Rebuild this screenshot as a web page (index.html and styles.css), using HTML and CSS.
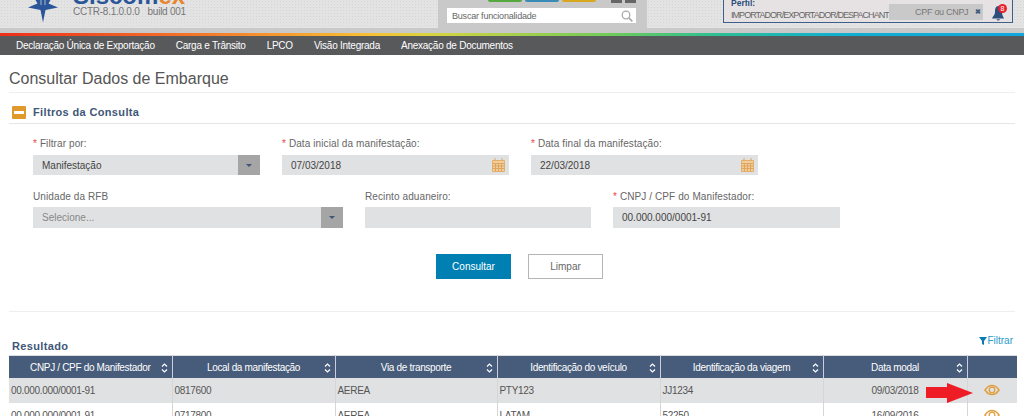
FILE: index.html
```html
<!DOCTYPE html>
<html lang="pt-BR">
<head>
<meta charset="utf-8">
<title>Consultar Dados de Embarque</title>
<link rel="stylesheet" href="styles.css">
</head>
<body>
<header class="top">
  <div class="brand">
    <svg class="star" width="36" height="24" viewBox="0 0 36 24"><path fill="#2a5599" d="M18 22.500 L15.500 10 L3 7.500 L12.500 3.500 L7 -6 L15 -1 L18 -6 L21 -1 L29 -6 L23.500 3.500 L33 7.500 L20.500 10 Z"/><path stroke="#e3e3e3" stroke-width=".7" d="M16 0v5M20 0v5"/></svg>
    <div class="brand-text">
      <div class="logo">Siscom<span class="logo-ex">ex</span></div>
      <div class="build"><span>CCTR-8.1.0.0.0</span><span>build 001</span></div>
    </div>
  </div>
  <div class="search-panel">
    <div class="tabs">
      <i class="tab green"></i><i class="tab blue"></i><i class="tab yellow"></i>
      <span class="squares"><i></i><i></i></span>
    </div>
    <div class="search"><span>Buscar funcionalidade</span>
      <svg width="12" height="12" viewBox="0 0 12 12"><circle cx="5" cy="5" r="3.800" fill="none" stroke="#aaa" stroke-width="1.300"/><path d="M7.800 7.800l3.500 3.500" stroke="#aaa" stroke-width="1.700"/></svg>
    </div>
  </div>
  <div class="user-zone">
    <div class="profile">
      <div class="profile-label">Perfil:</div>
      <div class="profile-value">IMPORTADOR/EXPORTADOR/DESPACHANT</div>
      <div class="cpf"><span>CPF ou CNPJ</span><b>✖</b></div>
      <div class="bell">
        <svg width="12" height="15" viewBox="0 0 12 15"><path fill="#2c4f7c" d="M6.500 0C3.500 0 3 3 3 6 3 9 1 10 0 12.500h12C11 10.500 10 9 10 6 10 3 9.500 0 6.500 0zM4.500 13.200a1.800 1.800 0 003.500 0z"/></svg>
        <span class="badge">8</span>
      </div>
    </div>
  </div>
</header>
<div class="rainbow"></div>
<nav class="nav">
  <a>Declaração Única de Exportação</a>
  <a>Carga e Trânsito</a>
  <a>LPCO</a>
  <a>Visão Integrada</a>
  <a>Anexação de Documentos</a>
</nav>
<main class="main">
  <h1 class="title">Consultar Dados de Embarque</h1>
  <div class="section-head">
    <span class="minus"><i></i></span>
    <span>Filtros da Consulta</span>
  </div>
  <form class="filters">
    <div class="row row-1">
      <div class="field f-filter">
        <label><em>*</em> Filtrar por:</label>
        <div class="control"><span>Manifestação</span><span class="drop"><i></i></span></div>
      </div>
      <div class="field f-date">
        <label><em>*</em> Data inicial da manifestação:</label>
        <div class="control"><span>07/03/2018</span>
          <svg class="cal" width="13" height="14" viewBox="0 0 13 14"><path fill="#f0cd9c" stroke="#e5b06c" d="M.5 2.500h12v11H.5z"/><path stroke="#e0a55c" d="M.5 5.500h12M.5 8h12M.5 10.500h12M3.500 5.500v8M6.500 5.500v8M9.500 5.500v8M3 0v3M10 0v3"/></svg>
        </div>
      </div>
      <div class="field f-date">
        <label><em>*</em> Data final da manifestação:</label>
        <div class="control"><span>22/03/2018</span>
          <svg class="cal" width="13" height="14" viewBox="0 0 13 14"><path fill="#f0cd9c" stroke="#e5b06c" d="M.5 2.500h12v11H.5z"/><path stroke="#e0a55c" d="M.5 5.500h12M.5 8h12M.5 10.500h12M3.500 5.500v8M6.500 5.500v8M9.500 5.500v8M3 0v3M10 0v3"/></svg>
        </div>
      </div>
    </div>
    <div class="row row-2">
      <div class="field f-unit">
        <label>Unidade da RFB</label>
        <div class="control muted"><span>Selecione...</span><span class="drop"><i></i></span></div>
      </div>
      <div class="field f-wide">
        <label>Recinto aduaneiro:</label>
        <div class="control"></div>
      </div>
      <div class="field f-wide f-last">
        <label><em>*</em> CNPJ / CPF do Manifestador:</label>
        <div class="control"><span>00.000.000/0001-91</span></div>
      </div>
    </div>
    <div class="actions">
      <button type="button" class="btn primary">Consultar</button>
      <button type="button" class="btn">Limpar</button>
    </div>
  </form>
  <section class="results">
    <div class="results-head">
      <span class="results-title">Resultado</span>
      <a class="filter-link"><svg width="8" height="8" viewBox="0 0 8 8"><path fill="#0b7bb5" d="M0 0h8L5 4v4L3 7V4z"/></svg>Filtrar</a>
    </div>
    <table class="grid">
      <colgroup><col class="c1"><col class="c2"><col class="c3"><col class="c4"><col class="c5"><col class="c6"><col class="c7"></colgroup>
      <thead>
        <tr>
          <th><div class="th">CNPJ / CPF do Manifestador<svg class="sort" width="7" height="10" viewBox="0 0 7 10"><path fill="none" stroke="#fff" stroke-width="1.200" d="M1 3.500L3.500 1 6 3.500M1 6.500L3.500 9 6 6.500"/></svg></div></th>
          <th><div class="th">Local da manifestação<svg class="sort" width="7" height="10" viewBox="0 0 7 10"><path fill="none" stroke="#fff" stroke-width="1.200" d="M1 3.500L3.500 1 6 3.500M1 6.500L3.500 9 6 6.500"/></svg></div></th>
          <th><div class="th">Via de transporte<svg class="sort" width="7" height="10" viewBox="0 0 7 10"><path fill="none" stroke="#fff" stroke-width="1.200" d="M1 3.500L3.500 1 6 3.500M1 6.500L3.500 9 6 6.500"/></svg></div></th>
          <th><div class="th">Identificação do veículo<svg class="sort" width="7" height="10" viewBox="0 0 7 10"><path fill="none" stroke="#fff" stroke-width="1.200" d="M1 3.500L3.500 1 6 3.500M1 6.500L3.500 9 6 6.500"/></svg></div></th>
          <th><div class="th">Identificação da viagem<svg class="sort" width="7" height="10" viewBox="0 0 7 10"><path fill="none" stroke="#fff" stroke-width="1.200" d="M1 3.500L3.500 1 6 3.500M1 6.500L3.500 9 6 6.500"/></svg></div></th>
          <th><div class="th">Data modal<svg class="sort" width="7" height="10" viewBox="0 0 7 10"><path fill="none" stroke="#fff" stroke-width="1.200" d="M1 3.500L3.500 1 6 3.500M1 6.500L3.500 9 6 6.500"/></svg></div></th>
          <th></th>
        </tr>
      </thead>
      <tbody>
        <tr class="odd">
          <td>00.000.000/0001-91</td><td>0817600</td><td>AEREA</td><td>PTY123</td><td>JJ1234</td><td class="right">09/03/2018</td>
          <td class="center"><svg width="16" height="12" viewBox="0 0 16 12"><path fill="none" stroke="#e0a040" stroke-width="1.500" d="M1 6c2-3 4.500-4.500 7-4.500S13 3 15 6c-2 3-4.500 4.500-7 4.500S3 9 1 6z"/><circle cx="8" cy="6" r="2.800" fill="none" stroke="#e0a040" stroke-width="1.300"/></svg></td>
        </tr>
        <tr>
          <td>00.000.000/0001-91</td><td>0717800</td><td>AEREA</td><td>LATAM</td><td>52250</td><td class="right">16/09/2016</td>
          <td class="center"><svg width="16" height="12" viewBox="0 0 16 12"><path fill="none" stroke="#e0a040" stroke-width="1.500" d="M1 6c2-3 4.500-4.500 7-4.500S13 3 15 6c-2 3-4.500 4.500-7 4.500S3 9 1 6z"/><circle cx="8" cy="6" r="2.800" fill="none" stroke="#e0a040" stroke-width="1.300"/></svg></td>
        </tr>
      </tbody>
    </table>
    <svg class="arrow" width="47" height="20" viewBox="0 0 47 20"><path fill="#ee1c25" d="M0 4h21V0l26 10-26 10v-5H0z"/></svg>
  </section>
</main>
</body>
</html>
```
FILE: styles.css
```css
html, body { margin: 0; padding: 0; }
body { width: 1024px; height: 416px; overflow: hidden; background: #fff; font-family: "Liberation Sans", Arial, sans-serif; color: #555; }
.top { height: 33px; display: flex; background: #c9c9c9; overflow: hidden; }
.brand { width: 438px; height: 28px; display: flex; background-color: #e3e3e3; background-image: radial-gradient(#d6d6d6 1px, transparent 1px); background-size: 3px 3px; padding-left: 25px; box-sizing: border-box; gap: 12px; }
.star { flex: none; }
.logo { font-size: 24px; font-weight: bold; color: #2a5599; line-height: 24px; margin-top: -16px; height: 22px; white-space: nowrap; }
.logo-ex { color: #e8842c; }
.build { font-size: 10px; letter-spacing: -.25px; color: #777; display: flex; gap: 8px; line-height: 12px; white-space: nowrap; }
.search-panel { width: 209px; padding: 0 11px 0 9px; box-sizing: border-box; }
.tabs { height: 8px; display: flex; align-items: flex-start; margin-left: 41px; gap: 3px; }
.tab { width: 34px; height: 2px; border-radius: 0 0 4px 4px; }
.green { background: #56a93f; }
.blue { background: #3a8cb8; }
.yellow { background: #d8a91f; }
.squares { display: flex; gap: 3px; margin-left: 12px; }
.squares i { width: 11px; height: 3px; background: #666; }
.search { height: 15px; background: #fff; display: flex; justify-content: space-between; align-items: center; padding: 0 3px 0 5px; font-size: 9px; letter-spacing: -.2px; color: #666; }
.user-zone { flex: 1; height: 28px; background-color: #e3e3e3; background-image: radial-gradient(#d6d6d6 1px, transparent 1px); background-size: 3px 3px; padding-left: 76px; }
.profile { height: 24px; width: 290px; box-sizing: border-box; background: #e6e2e3; border: 1px solid #3d5f8a; border-top: 0; font-size: 9px; padding-left: 7px; position: relative; }
.profile-label { color: #2c4f7c; font-weight: bold; font-size: 8.500px; line-height: 8px; margin-top: -1px; height: 9px; }
.profile-value { color: #666; line-height: 12px; padding-top: 1px; letter-spacing: -.95px; white-space: nowrap; }
.cpf { position: absolute; left: 165px; top: 5px; width: 94px; height: 16px; background: #c9c9c9; display: flex; align-items: center; justify-content: flex-end; gap: 7px; padding-right: 2px; box-sizing: border-box; color: #777; font-size: 9px; letter-spacing: -.3px; }
.cpf b { color: #41597c; font-size: 7px; }
.bell { position: absolute; left: 268px; top: 7px; width: 12px; height: 15px; }
.badge { position: absolute; left: 6px; top: -2px; width: 9px; height: 9px; border-radius: 50%; background: #e8202c; color: #fff; font-size: 7px; line-height: 9px; text-align: center; }
.rainbow { height: 3px; background: linear-gradient(90deg, #ee2f1a 0, #f47a2b 20%, #f7c033 36%, #d8d440 42%, #6ccb5a 60%, #2cbf93 70%, #10b0d0 82%, #10a8e0 100%); }
.nav { height: 19px; background: #58595b; display: flex; align-items: center; padding-left: 16px; gap: 21px; color: #fff; font-size: 10px; letter-spacing: -.25px; }
.main { padding: 0 9px; }
.title { font-weight: normal; font-size: 16px; line-height: 19px; color: #555; margin: 0; padding: 14px 0 4px; border-bottom: 1px solid #eee; }
.section-head { height: 31px; box-sizing: border-box; padding: 8px 0 0 3px; display: flex; align-items: center; gap: 7px; color: #3e5777; font-size: 11px; font-weight: bold; letter-spacing: .35px; border-bottom: 1px solid #e6e6e6; }
.minus { width: 14px; height: 13px; background: #e09a2b; display: flex; align-items: center; justify-content: center; border-radius: 1px; }
.minus i { width: 10px; height: 3px; background: #fff; }
.filters { border-bottom: 1px solid #eee; height: 188px; padding: 0 24px; box-sizing: border-box; }
.row { display: flex; }
.row-1 { padding-top: 14px; gap: 22px; }
.row-1 label { margin-bottom: 5px; }
.row-2 { padding-top: 16px; gap: 22px; }
.row-2 .control { height: 21px; }
.field label { display: block; font-size: 10px; line-height: 12px; color: #666; letter-spacing: .1px; height: 12px; }
.row-2 label { margin-bottom: 4px; }
.field em { color: #e44; font-style: normal; }
.control { height: 20px; background: #e0e1e2; display: flex; align-items: center; padding-left: 9px; font-size: 10px; color: #444; position: relative; }
.muted { color: #888; }
.f-filter { width: 227px; }
.f-date { width: 227px; }
.f-unit { width: 310px; }
.f-wide { width: 226px; }
.f-last { width: 227px; }
.drop { position: absolute; right: 0; top: 0; bottom: 0; width: 22px; background: #a5a5a5; display: flex; align-items: center; justify-content: center; }
.drop i { width: 0; height: 0; border: 3px solid transparent; border-top: 3px solid #3e5777; border-bottom: 0; }
.cal { position: absolute; right: 4px; top: 3px; }
.actions { display: flex; justify-content: center; gap: 17px; padding-top: 26px; margin-left: 15px; }
.btn { width: 75px; height: 25px; border: 1px solid #b5b5b5; background: #fff; color: #666; font: 10px "Liberation Sans", Arial, sans-serif; padding: 0; }
.primary { background: #007fb2; border-color: #007fb2; color: #fff; }
.results { position: relative; }
.results-head { height: 43px; display: flex; justify-content: space-between; align-items: flex-end; padding: 0 3px; box-sizing: border-box; }
.results-title { color: #3e5777; font-size: 11px; font-weight: bold; letter-spacing: .35px; line-height: 15px; padding-bottom: 1px; }
.filter-link { color: #2b9ac9; font-size: 10px; line-height: 12px; padding-bottom: 8px; margin-right: -1px; display: flex; align-items: center; }
.grid { border-collapse: collapse; table-layout: fixed; width: 1008px; font-size: 10px; letter-spacing: -.3px; border-top: 1px solid #ddd; }
.c1 { width: 163px; } .c2 { width: 163px; } .c3 { width: 162px; } .c4 { width: 163px; } .c5 { width: 163px; } .c6 { width: 144px; } .c7 { width: 50px; }
.grid th { background: #475c7a; color: #fff; height: 22px; padding: 0; letter-spacing: -.33px; font-weight: normal; border-right: 1px solid #ccd; }
.grid th:last-child { border-right: 0; }
.th { display: flex; align-items: center; justify-content: center; position: relative; }
.sort { position: absolute; right: 4px; top: 1px; }
.grid td { height: 25px; padding: 0 2px; color: #555; border-right: 1px solid #d6d6d6; white-space: nowrap; }
.grid td:last-child { border-right: 0; }
.odd td { background: #e0e1e2; }
.right { text-align: right; padding-right: 48px !important; }
.center { text-align: center; }
.center svg { display: block; margin: 0 auto; position: relative; top: -1px; }
.arrow { position: absolute; left: 917px; top: 71px; }
```
